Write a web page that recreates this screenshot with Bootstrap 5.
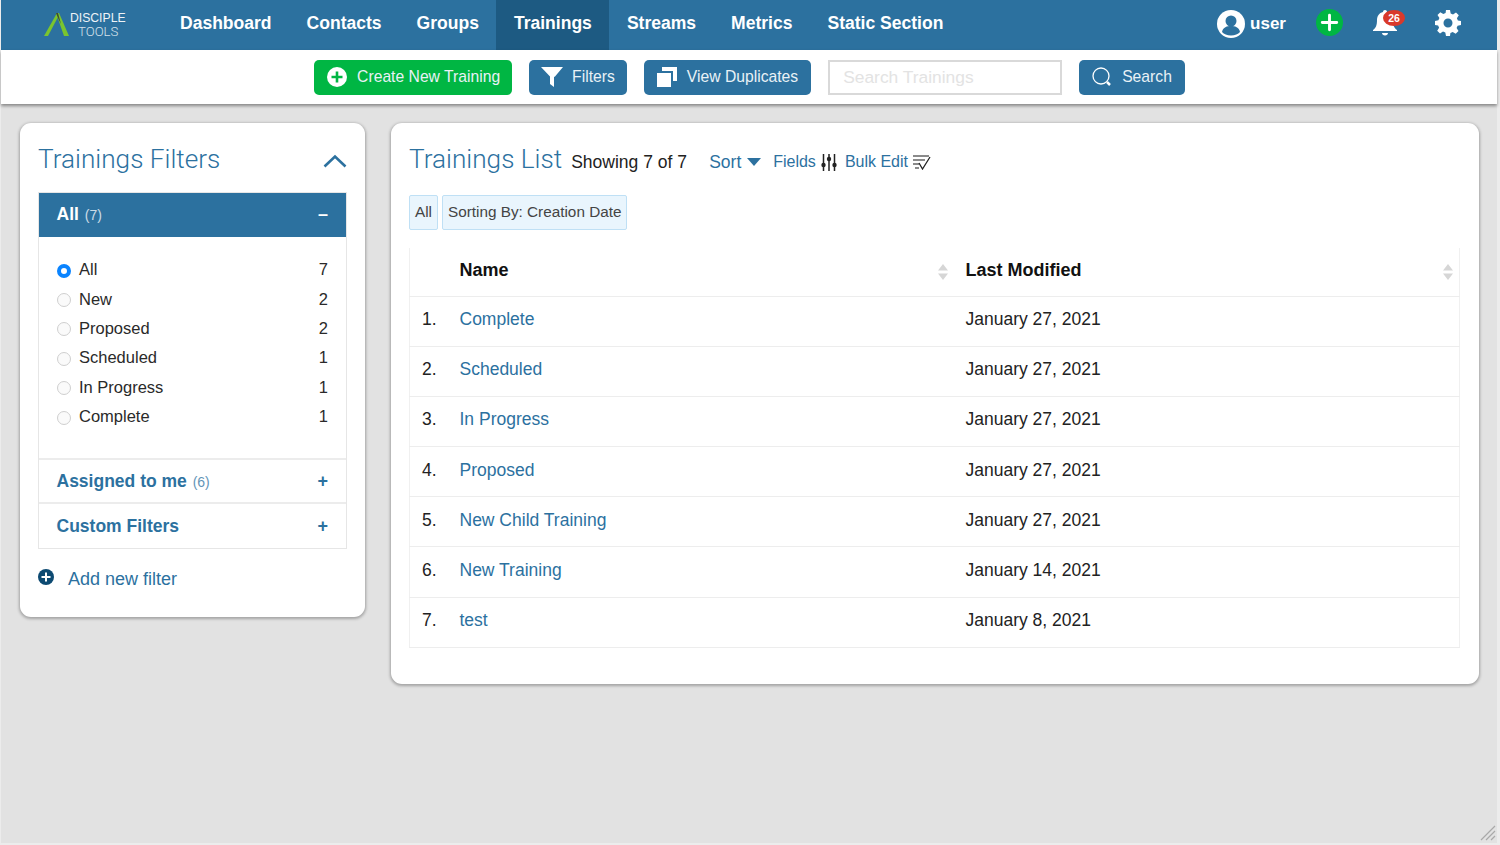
<!DOCTYPE html>
<html lang="en">
<head>
    <meta charset="UTF-8">
    <meta name="viewport" content="width=device-width, initial-scale=1.0">
    <title>Trainings</title>
    <link rel="stylesheet" href="https://cdn.jsdelivr.net/npm/bootstrap@5.3.0/dist/css/bootstrap.min.css">
    <style>
        html, body { height: 100%; }
        body {
            background-color: #ececec;
            font-family: "Liberation Sans", Arial, sans-serif;
            color: #222;
            font-size: 17px;
            overflow: hidden;
        }
        .app-shell {
            position: relative;
            height: 843px;
            margin: 0 3px 0 1px;
            background-color: #e2e2e2;
        }

        /* top bar */
        .top-bar {
            background: #2c719f;
            height: 50px;
            color: #fff;
            padding-left: 43px;
        }
        .brand-box { width: 118.500px; }
        .brand-words {
            font-size: 12.200px;
            line-height: 13px;
            margin-left: 1px;
            color: #eef3f7;
        }
        .brand-words span { display: block; }
        .brand-words .thin {
            font-family: Roboto, sans-serif;
            font-weight: 300;
            color: #d5e1ea;
            padding-left: 8px;
            font-size: 13.200px;
        }
        .top-link {
            color: #fff;
            font-weight: 700;
            font-size: 17.550px;
            text-decoration: none;
            padding: 0 17.500px 3px;
            height: 50px;
            display: flex;
            align-items: center;
        }
        .top-link.current { background: #1d5a82; }
        .top-tools { padding-right: 36px; padding-bottom: 3px; gap: 30px; }
        .user-tag { font-size: 17px; font-weight: 700; gap: 5px; }
        .bell-wrap { position: relative; width: 25px; height: 30px; }
        .bell-count {
            position: absolute;
            top: 1px;
            left: 10px;
            width: 22px;
            height: 16px;
            border-radius: 50%;
            background: #d9392b;
            color: #fff;
            font-size: 10.500px;
            font-weight: 700;
            line-height: 16px;
            text-align: center;
        }
        .plus-icon { margin-bottom: 2px; }
        .gear-icon { margin-left: 7px; margin-bottom: 2px; }

        /* second bar */
        .action-bar {
            background: #fff;
            height: 54px;
            gap: 17px;
            box-shadow: 0 2px 3px rgba(0, 0, 0, .4);
            position: relative;
            padding-left: 1px;
        }
        .act-btn {
            display: flex;
            align-items: center;
            height: 35px;
            border-radius: 5px;
            border: 0;
            background: #2c719f;
            color: #e9f1f6;
            font-size: 15.700px;
            padding: 0 13px;
            gap: 10px;
        }
        .act-btn.green { background: #00b643; padding-right: 12px; }
        .act-btn.funnel-btn { padding: 0 12px; gap: 9px; }
        .search-box {
            width: 234px;
            height: 35px;
            border: 2px solid #d9d9d9;
            padding: 0 13px;
            font-size: 17.400px;
            color: #e3e3e3;
            line-height: 31px;
        }

        /* panels */
        .page-body {
            padding: 19px 19px 0 19px;
            gap: 26px;
            align-items: flex-start;
        }
        .side-panel, .main-panel {
            background: #fff;
            border-radius: 11px;
            box-shadow: 0 1px 3px 1px rgba(0, 0, 0, .28);
        }
        .side-panel { width: 345px; height: 494px; padding: 18px 18px 0; flex: none; }
        .main-panel { width: 1088px; height: 561px; padding: 18px 18px 0; flex: none; }
        .panel-title {
            font-family: Roboto, "Liberation Sans", sans-serif;
            color: #2c719f;
            font-size: 26.200px;
            font-weight: 300;
            line-height: 36px;
            margin: 0;
        }

        /* filter accordion */
        .filter-box {
            margin-top: 15px;
            border: 1px solid #e6e6e6;
            width: 309px;
        }
        .filter-head {
            height: 44px;
            padding: 0 18px 0 17.500px;
            color: #2c719f;
            font-weight: 700;
            font-size: 17.500px;
            display: flex;
            align-items: center;
            justify-content: space-between;
        }
        .filter-head.open { background: #2c719f; color: #fff; height: 44px; padding-bottom: 2px; }
        .filter-head .num { font-weight: 400; font-size: 14px; margin-left: 1px; opacity: .75; }
        .sign { font-size: 18px; font-weight: 700; line-height: 1; }
        .filter-rows { padding: 18px 18px 27px; border-bottom: 2px solid #ececec; }
        .filter-row {
            height: 29.400px;
            display: flex;
            align-items: center;
            font-size: 16.500px;
            color: #2a2a2a;
        }
        .radio-dot {
            width: 14px;
            height: 14px;
            border-radius: 50%;
            border: 1px solid #cfcfcf;
            background: #fafafa;
            margin-right: 8px;
            margin-top: 2px;
            flex: none;
        }
        .radio-dot.on { border: 4px solid #0a84ff; background: #fff; }
        .filter-sep { border-bottom: 2px solid #ececec; }
        .add-filter {
            color: #2c719f;
            font-size: 18px;
            margin-top: 18px;
            gap: 14px;
            line-height: 24px;
        }

        /* list */
        .list-head { height: 36px; }
        .list-count { font-size: 17.500px; color: #222; margin: 6px 0 0 9px; width: 138px; }
        .list-act {
            color: #2c719f;
            font-size: 16px;
            text-decoration: none;
            margin-top: 6px;
            display: flex;
            align-items: center;
            gap: 5px;
        }
        .sort-act { font-size: 17.500px; gap: 6px; width: 64px; }
        .fields-act { margin-right: 8px; }
        .tag-row { gap: 4px; margin-top: 18px; }
        .filter-tag {
            background: #e9f5fd;
            border: 1px solid #bfe0f5;
            border-radius: 2px;
            color: #444;
            font-size: 15.300px;
            height: 35px;
            line-height: 32px;
            padding: 0 5px;
        }
        .train-table {
            margin: 18px 0 0;
            width: 1051px;
            border-left: 1px solid #f0f0f0;
            border-right: 1px solid #f0f0f0;
            table-layout: fixed;
            font-size: 17.500px;
        }
        .train-table th, .train-table td {
            padding: 0 0 4px;
            border-bottom: 1px solid #ededed;
            vertical-align: middle;
            color: #222;
        }
        .train-table td { height: 50.200px; }
        .train-table th { height: 48px; color: #111; position: relative; font-size: 18px; padding-bottom: 2px; }
        .train-table td a { color: #2c719f; text-decoration: none; }
        .col-idx { width: 50px; padding-left: 12px !important; }
        .col-name { width: 506px; }
        .sort-arrows { position: absolute; right: 6px; top: 16px; }
        .col-name .sort-arrows { right: 18px; }
        .grip { position: absolute; right: 1px; bottom: 2px; }
    </style>
</head>
<body>
<div class="app-shell">

    <div class="top-bar d-flex align-items-center">
        <div class="brand-box d-flex align-items-center">
            <svg width="25" height="24" viewBox="0 0 25 24">
                <polygon points="13,0 0,23 4,23 14,4" fill="#7ac52f"/>
                <polygon points="12,0 15,0 25,23 20,23" fill="#7ac52f"/>
                <polygon points="12,0 14,0 17,11 14,5" fill="#3f4a34"/>
            </svg>
            <div class="brand-words"><span>DISCIPLE</span><span class="thin">TOOLS</span></div>
        </div>
        <a class="top-link" href="#">Dashboard</a>
        <a class="top-link" href="#">Contacts</a>
        <a class="top-link" href="#">Groups</a>
        <a class="top-link current" href="#">Trainings</a>
        <a class="top-link" href="#">Streams</a>
        <a class="top-link" href="#">Metrics</a>
        <a class="top-link" href="#">Static Section</a>
        <div class="top-tools d-flex align-items-center ms-auto">
            <div class="user-tag d-flex align-items-center">
                <svg width="28" height="28" viewBox="0 0 28 28">
                    <circle cx="14" cy="14" r="14" fill="#fff"/>
                    <circle cx="14" cy="11" r="5.500" fill="#2c719f"/>
                    <path d="M5 22c1-5 5-6 9-6s8 1 9 6c-2 2-5 3.500-9 3.500S7 24 5 22z" fill="#2c719f"/>
                </svg>
                user
            </div>
            <svg class="plus-icon" width="27" height="27" viewBox="0 0 28 28">
                <circle cx="14" cy="14" r="14" fill="#00b643"/>
                <path d="M14 6.500v15M6.500 14h15" stroke="#fff" stroke-width="3" stroke-linecap="round"/>
            </svg>
            <div class="bell-wrap">
                <svg width="24" height="28" viewBox="0 0 24 28" class="d-block">
                    <path d="M12 1c1.200 0 2 .8 2 2 4 1 6 4 6 8 0 5 1 8 4 10v1H0v-1c3-2 4-5 4-10 0-4 2-7 6-8 0-1.200.8-2 2-2z" fill="#fff"/>
                    <path d="M9 24h6c0 1.500-1.300 2.500-3 2.500S9 25.500 9 24z" fill="#fff"/>
                </svg>
                <span class="bell-count">26</span>
            </div>
            <svg class="gear-icon" width="26" height="26" viewBox="0 0 26 26">
                <path fill="#fff" fill-rule="evenodd" d="M11 0h4l.7 3.400 2.300 1 3-1.900 2.800 2.800-1.900 3 1 2.300L26 11v4l-3.400.7-1 2.300 1.900 3-2.800 2.800-3-1.900-2.300 1L15 26h-4l-.7-3.400-2.300-1-3 1.900-2.800-2.800 1.900-3-1-2.300L0 15v-4l3.400-.7 1-2.300-1.900-3 2.800-2.800 3 1.900 2.300-1zM13 8.500a4.500 4.500 0 1 0 0 9 4.500 4.500 0 0 0 0-9z"/>
            </svg>
        </div>
    </div>

    <div class="action-bar d-flex align-items-center justify-content-center">
        <button class="act-btn green" type="button">
            <svg width="20" height="20" viewBox="0 0 20 20">
                <circle cx="10" cy="10" r="10" fill="#fff"/>
                <path d="M10 4.500v11M4.500 10h11" stroke="#00b643" stroke-width="2.600"/>
            </svg>
            Create New Training
        </button>
        <button class="act-btn funnel-btn" type="button">
            <svg width="22" height="20" viewBox="0 0 22 20">
                <path d="M0 0h22l-8 9.500-1 .5V20l-4-3v-7.500z" fill="#fff"/>
            </svg>
            Filters
        </button>
        <button class="act-btn" type="button">
            <svg width="20" height="20" viewBox="0 0 20 20">
                <path d="M5 0h15v14h-4V4H5z" fill="#fff"/>
                <rect x="0" y="6" width="14" height="14" fill="#fff"/>
            </svg>
            View Duplicates
        </button>
        <div class="search-box">Search Trainings</div>
        <button class="act-btn" type="button">
            <svg width="20" height="20" viewBox="0 0 20 20" fill="none">
                <circle cx="9" cy="9" r="8" stroke="#fff" stroke-width="1.300"/>
                <path d="M15 15l3 3" stroke="#fff" stroke-width="2.500"/>
            </svg>
            Search
        </button>
    </div>

    <div class="page-body d-flex">
        <div class="side-panel">
            <div class="d-flex justify-content-between align-items-center">
                <h2 class="panel-title">Trainings Filters</h2>
                <svg width="24" height="14" viewBox="0 0 24 14" class="mt-1" fill="none">
                    <path d="M1.500 12.500L12 2.500l10.500 10" stroke="#2c719f" stroke-width="2.600"/>
                </svg>
            </div>
            <div class="filter-box">
                <div class="filter-head open">
                    <span>All <span class="num">(7)</span></span>
                    <span class="sign">&#8211;</span>
                </div>
                <div class="filter-rows">
                    <div class="filter-row"><span class="radio-dot on"></span>All<span class="ms-auto">7</span></div>
                    <div class="filter-row"><span class="radio-dot"></span>New<span class="ms-auto">2</span></div>
                    <div class="filter-row"><span class="radio-dot"></span>Proposed<span class="ms-auto">2</span></div>
                    <div class="filter-row"><span class="radio-dot"></span>Scheduled<span class="ms-auto">1</span></div>
                    <div class="filter-row"><span class="radio-dot"></span>In Progress<span class="ms-auto">1</span></div>
                    <div class="filter-row"><span class="radio-dot"></span>Complete<span class="ms-auto">1</span></div>
                </div>
                <div class="filter-head filter-sep">
                    <span>Assigned to me <span class="num">(6)</span></span>
                    <span class="sign">+</span>
                </div>
                <div class="filter-head">
                    <span>Custom Filters</span>
                    <span class="sign">+</span>
                </div>
            </div>
            <div class="add-filter d-flex align-items-center">
                <svg width="16" height="16" viewBox="0 0 16 16" class="mb-1">
                    <circle cx="8" cy="8" r="8" fill="#0d4a72"/>
                    <path d="M8 3.500v9M3.500 8h9" stroke="#fff" stroke-width="2"/>
                </svg>
                Add new filter
            </div>
        </div>

        <div class="main-panel">
            <div class="list-head d-flex align-items-center">
                <h2 class="panel-title">Trainings List</h2>
                <span class="list-count">Showing 7 of 7</span>
                <a class="list-act sort-act" href="#">Sort
                    <svg width="14" height="8" viewBox="0 0 14 8"><path d="M0 0h14L7 8z" fill="#2c719f"/></svg>
                </a>
                <a class="list-act fields-act" href="#">Fields
                    <svg width="16" height="17" viewBox="0 0 16 17" fill="none">
                        <path d="M2.500 0v17M8 0v17M13.500 0v17" stroke="#222" stroke-width="1.500"/>
                        <circle cx="2.500" cy="11" r="2.200" fill="#222"/>
                        <circle cx="8" cy="5" r="2.200" fill="#222"/>
                        <circle cx="13.500" cy="11" r="2.200" fill="#222"/>
                    </svg>
                </a>
                <a class="list-act" href="#">Bulk Edit
                    <svg width="18" height="16" viewBox="0 0 18 16" fill="none">
                        <path d="M0 2h16M0 6h12M0 10h6M2 14h4" stroke="#666" stroke-width="1.500"/>
                        <path d="M6 9l3.500 6L17 3" stroke="#222" stroke-width="1.300"/>
                    </svg>
                </a>
            </div>
            <div class="tag-row d-flex">
                <span class="filter-tag">All</span>
                <span class="filter-tag">Sorting By: Creation Date</span>
            </div>
            <table class="train-table">
                <thead>
                    <tr>
                        <th class="col-idx"></th>
                        <th class="col-name">Name
                            <svg class="sort-arrows" width="10" height="16" viewBox="0 0 10 16"><path d="M5 0l5 6.500H0zM5 16l5-6.500H0z" fill="#d6d6d6"/></svg>
                        </th>
                        <th>Last Modified
                            <svg class="sort-arrows" width="10" height="16" viewBox="0 0 10 16"><path d="M5 0l5 6.500H0zM5 16l5-6.500H0z" fill="#d6d6d6"/></svg>
                        </th>
                    </tr>
                </thead>
                <tbody>
                    <tr><td class="col-idx">1.</td><td><a href="#">Complete</a></td><td>January 27, 2021</td></tr>
                    <tr><td class="col-idx">2.</td><td><a href="#">Scheduled</a></td><td>January 27, 2021</td></tr>
                    <tr><td class="col-idx">3.</td><td><a href="#">In Progress</a></td><td>January 27, 2021</td></tr>
                    <tr><td class="col-idx">4.</td><td><a href="#">Proposed</a></td><td>January 27, 2021</td></tr>
                    <tr><td class="col-idx">5.</td><td><a href="#">New Child Training</a></td><td>January 27, 2021</td></tr>
                    <tr><td class="col-idx">6.</td><td><a href="#">New Training</a></td><td>January 14, 2021</td></tr>
                    <tr><td class="col-idx">7.</td><td><a href="#">test</a></td><td>January 8, 2021</td></tr>
                </tbody>
            </table>
        </div>
    </div>

    <svg class="grip" width="16" height="16" viewBox="0 0 16 16">
        <path d="M1 15L15 1M6 15l9-9M11 15l4-4" stroke="#a9a9a9" stroke-width="1.200"/>
    </svg>
</div>

<script src="https://cdn.jsdelivr.net/npm/bootstrap@5.3.0/dist/js/bootstrap.bundle.min.js"></script>
</body>
</html>
